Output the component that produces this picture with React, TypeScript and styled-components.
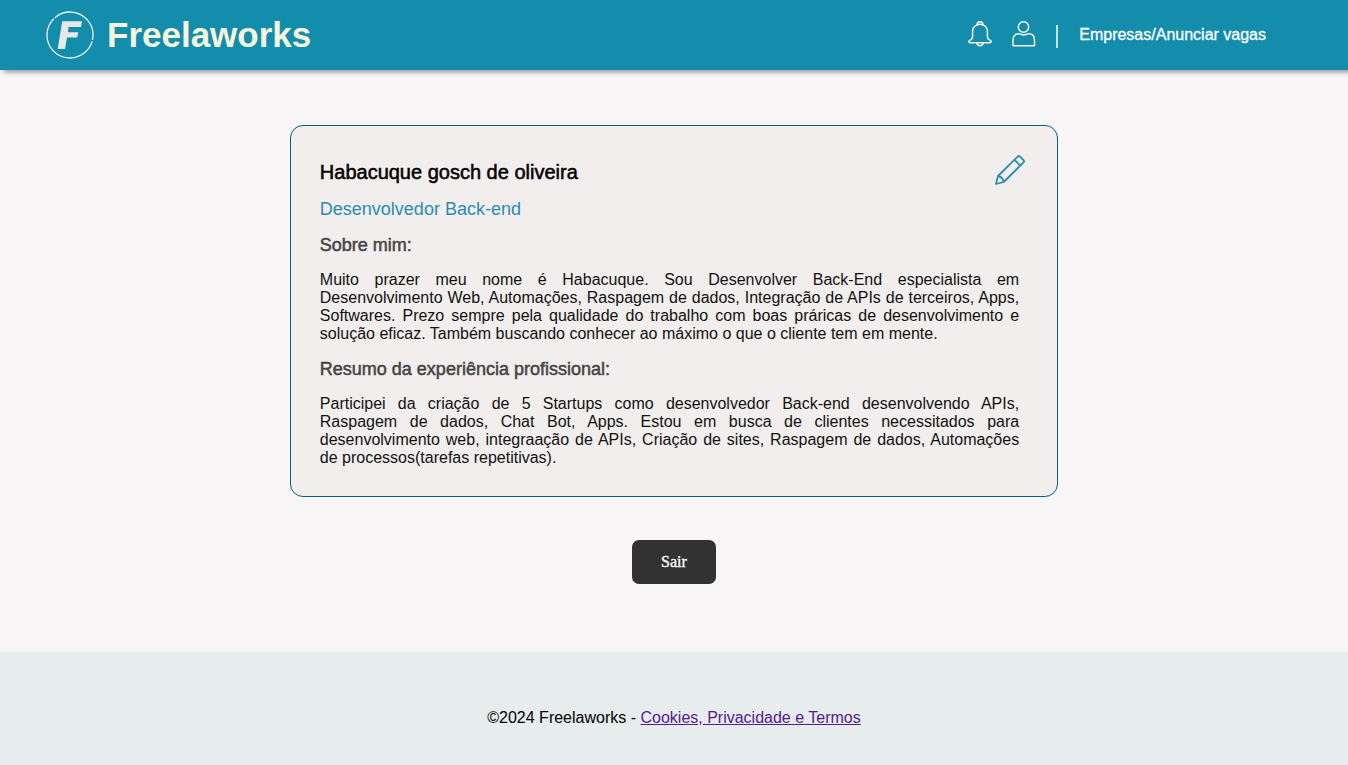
import React from 'react';
import styled, { createGlobalStyle } from 'styled-components';

const GlobalStyle = createGlobalStyle`
  * { box-sizing: border-box; }
  body {
    margin: 0;
    background: #f7f5f6;
    color: #000;
    font-family: 'Liberation Sans', Arial, sans-serif;
    font-size: 16px;
  }
`;

const Page = styled.div`
  display: flex;
  flex-direction: column;
  min-height: 100vh;
`;

const Header = styled.header`
  display: flex;
  align-items: center;
  justify-content: space-between;
  height: 70px;
  padding: 0 82px 0 46px;
  background: #148cac;
  box-shadow: 5px 1px 5px 1px rgba(0, 0, 0, 0.4);
`;

const Brand = styled.a`
  display: flex;
  align-items: center;
  gap: 13px;
  color: #f5f5dc;
  font-size: 35px;
  font-weight: 700;
  line-height: 40px;
  text-decoration: none;
`;

const Nav = styled.nav`
  display: flex;
  align-items: center;
`;

const IconButton = styled.button`
  display: flex;
  margin: 0 20px 2px 0;
  padding: 0;
  border: 0;
  background: none;
  color: #f5f5dc;
  cursor: pointer;
`;

const Divider = styled.span`
  width: 2px;
  height: 23px;
  margin: 2px 21px 0 0;
  background: #c4e3e2;
`;

const NavLink = styled.a`
  color: #fff;
  line-height: 18px;
  text-decoration: none;
  -webkit-text-stroke: 0.3px #fff;
`;

const Main = styled.main`
  display: flex;
  flex: 1;
  flex-direction: column;
  align-items: center;
  padding: 55px 0 68px;
`;

const Card = styled.article`
  width: 57%;
  padding: 29px 32px 29px 29px;
  border: 1px solid #046080;
  border-radius: 13px;
  background: #f2eeed;
`;

const CardTop = styled.div`
  display: flex;
  align-items: flex-start;
  justify-content: space-between;
`;

const Name = styled.h1`
  margin: 6px 0 16px;
  font-size: 20px;
  font-weight: 400;
  line-height: 22px;
  -webkit-text-stroke: 0.5px #000;
`;

const Role = styled.p`
  margin: 0;
  color: #2b8cae;
  font-size: 18px;
  line-height: 20px;
`;

const EditButton = styled(IconButton)`
  margin: 0;
  color: #2b8cae;
`;

const SectionTitle = styled.h2`
  margin: 16px 0;
  color: #444;
  font-size: 18px;
  font-weight: 400;
  line-height: 20px;
  -webkit-text-stroke: 0.5px #444;
`;

const Text = styled.p`
  margin: 0 6px 0 0;
  color: #111;
  line-height: 18px;
  text-align: justify;
`;

const LogoutButton = styled.button`
  min-width: 84px;
  margin-top: 43px;
  padding: 12px 28px;
  border: 0;
  border-radius: 7px;
  background: #323233;
  color: #fff;
  font-family: 'Liberation Serif', 'Times New Roman', serif;
  font-size: 16px;
  line-height: 20px;
  cursor: pointer;
  -webkit-text-stroke: 0.3px #fff;
`;

const Footer = styled.footer`
  padding: 57px 0 38px;
  background: #e7eded;
  line-height: 18px;
  text-align: center;
  font-size: 16px;

  p { margin: 0; }
  a { color: #551a8b; }
`;

const Logo = () => (
  <svg width="48" height="48" viewBox="0 0 48 48" fill="none" aria-hidden="true">
    <circle
      cx="24"
      cy="24"
      r="23"
      stroke="#eef5f5"
      strokeWidth="1.3"
      pathLength="360"
      strokeDasharray="143 4 210 3"
      transform="rotate(-131 24 24)"
    />
    <path d="M16.2 10.2H36l-1 5.8H22.6l-.8 5.3H32.2l-.9 5.2H21L19 38h-7.3z" fill="#e8e8e8" />
  </svg>
);

const Bell = () => (
  <svg width="24" height="26" viewBox="0 0 24 26" fill="none" stroke="currentColor" strokeWidth="1.5" strokeLinejoin="round" aria-hidden="true">
    <path d="M9 3.9C6.2 5.1 4.6 7.4 4.6 10.5v5.1c0 1.5-.5 2.4-1.8 3.1-1.3.6-2 1-2 1.9 0 .8.6 1.1 1.4 1.1h19.6c.8 0 1.4-.3 1.4-1.1 0-.9-.7-1.3-2-1.9-1.3-.7-1.8-1.6-1.8-3.1v-5.1c0-3.1-1.6-5.4-4.4-6.6" />
    <path d="M9 4.1C9 1.9 10.100.8 12 .8s3 1.100 3 3.300c-1.8-.9-4.200-.9-6 0ZM8.800 21.700c.2 1.900 1.400 3.100 3.200 3.100s3-1.200 3.200-3.100" />
  </svg>
);

const Person = () => (
  <svg width="24" height="26" viewBox="0 0 24 26" fill="none" stroke="currentColor" strokeWidth="1.5" strokeLinejoin="round" aria-hidden="true">
    <circle cx="11.500" cy="6" r="5.200" />
    <path d="M6.800 12.800C3.200 12.800 1 15.300 1 19.200v5.500h21.500v-5.500c0-3.900-2.200-6.400-5.800-6.400-1.400 0-2.900 1.200-4.950 1.200s-3.550-1.200-4.950-1.200Z" />
  </svg>
);

const Pencil = () => (
  <svg width="30" height="30" viewBox="0 0 30 30" fill="none" stroke="currentColor" strokeWidth="1.8" strokeLinejoin="round" aria-hidden="true">
    <path d="M1 29l2-8L22.7 1.6c.8-.8 1.5-.8 2.3 0l3.5 3.5c.8.8.8 1.5 0 2.3L8.8 27 1 29ZM3 21c3 .7 5 2.7 5.8 6M19.5 4.8l5.8 5.8" />
  </svg>
);

export default function App() {
  return (
    <Page>
      <GlobalStyle />
      <Header>
        <Brand href="#">
          <Logo />
          Freelaworks
        </Brand>
        <Nav>
          <IconButton type="button" aria-label="Notificações"><Bell /></IconButton>
          <IconButton type="button" aria-label="Perfil"><Person /></IconButton>
          <Divider />
          <NavLink href="#">Empresas/Anunciar vagas</NavLink>
        </Nav>
      </Header>
      <Main>
        <Card>
          <CardTop>
            <div>
              <Name>Habacuque gosch de oliveira</Name>
              <Role>Desenvolvedor Back-end</Role>
            </div>
            <EditButton type="button" aria-label="Editar perfil"><Pencil /></EditButton>
          </CardTop>
          <SectionTitle>Sobre mim:</SectionTitle>
          <Text>
            Muito prazer meu nome é Habacuque. Sou Desenvolver Back-End especialista em
            Desenvolvimento Web, Automações, Raspagem de dados, Integração de APIs de
            terceiros, Apps, Softwares. Prezo sempre pela qualidade do trabalho com boas
            práricas de desenvolvimento e solução eficaz. Também buscando conhecer ao máximo
            o que o cliente tem em mente.
          </Text>
          <SectionTitle>Resumo da experiência profissional:</SectionTitle>
          <Text>
            Participei da criação de 5 Startups como desenvolvedor Back-end desenvolvendo
            APIs, Raspagem de dados, Chat Bot, Apps. Estou em busca de clientes necessitados
            para desenvolvimento web, integraação de APIs, Criação de sites, Raspagem de
            dados, Automações de processos(tarefas repetitivas).
          </Text>
        </Card>
        <LogoutButton type="button">Sair</LogoutButton>
      </Main>
      <Footer>
        <p>©2024 Freelaworks - <a href="#">Cookies, Privacidade e Termos</a></p>
      </Footer>
    </Page>
  );
}
